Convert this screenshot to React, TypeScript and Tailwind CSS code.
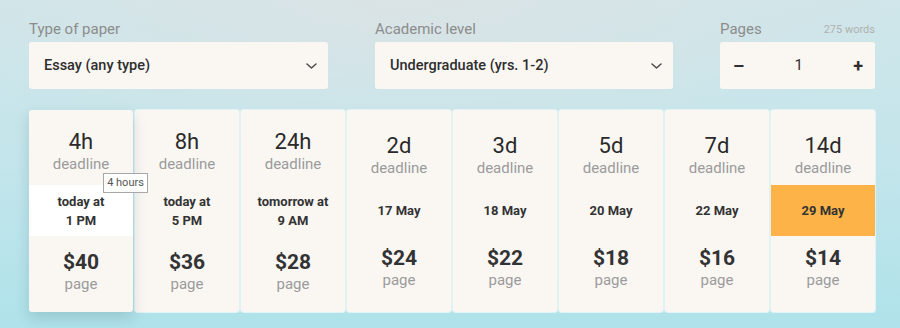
import React from "react";

type Card = {
  t: string;
  date: string[];
  price: string;
  state?: "selected" | "highlight";
};

const cards: Card[] = [
  { t: "4h", date: ["today at", "1 PM"], price: "$40", state: "selected" },
  { t: "8h", date: ["today at", "5 PM"], price: "$36" },
  { t: "24h", date: ["tomorrow at", "9 AM"], price: "$28" },
  { t: "2d", date: ["17 May"], price: "$24" },
  { t: "3d", date: ["18 May"], price: "$22" },
  { t: "5d", date: ["20 May"], price: "$18" },
  { t: "7d", date: ["22 May"], price: "$16" },
  { t: "14d", date: ["29 May"], price: "$14", state: "highlight" },
];

function Chevron() {
  return (
    <svg width="11" height="6" viewBox="0 0 11 6" fill="none">
      <path d="M1 1l4.5 4L10 1" stroke="#4a4a4a" strokeWidth="1.5" strokeLinecap="round" strokeLinejoin="round" />
    </svg>
  );
}

function Select({ label, value }: { label: string; value: string }) {
  return (
    <div className="flex flex-col">
      <div className="h-[18px] text-[15px] leading-[18px] text-[#8c8c8c] mb-[4px]">{label}</div>
      <div className="h-[47px] rounded-[3px] bg-[#faf7f3] flex items-center justify-between pl-[15px] pr-[11px]">
        <span className="text-[14.5px] font-medium text-[#2e2e2e]">{value}</span>
        <Chevron />
      </div>
    </div>
  );
}

export default function App() {
  return (
    <div
      className="w-[900px] h-[328px] overflow-hidden pl-[29px] pr-[25px] pt-[20px] bg-[radial-gradient(ellipse_60%_45%_at_45%_0%,#dae3e5_0%,rgba(218,227,229,0)_100%),linear-gradient(180deg,#cfe6ea_0%,#c3e5eb_50%,#afe2ea_100%)]"
      style={{ fontFamily: "Roboto, 'Open Sans', sans-serif" }}
    >
      <div className="flex gap-[47px]">
        <div className="w-[299px] flex-none">
          <Select label="Type of paper" value="Essay (any type)" />
        </div>
        <div className="w-[298px] flex-none">
          <Select label="Academic level" value="Undergraduate (yrs. 1-2)" />
        </div>
        <div className="w-[155px] flex-none flex flex-col">
          <div className="h-[18px] flex items-end justify-between mb-[4px] leading-[18px]">
            <span className="text-[15px] text-[#8c8c8c]">Pages</span>
            <span className="text-[11px] text-[#b0b0b0] pb-[1px] leading-[14px]">275 words</span>
          </div>
          <div className="h-[47px] rounded-[3px] bg-[#faf7f3] flex items-center justify-between pl-[13px] pr-[12px] text-[#2e2e2e]">
            <span className="text-[18px] font-bold leading-none">–</span>
            <span className="text-[15px]">1</span>
            <span className="text-[18px] font-bold leading-none">+</span>
          </div>
        </div>
      </div>

      <div className="mt-[21px] flex gap-[2px] h-[202px]">
        {cards.map((c) => {
          const two = c.date.length > 1;
          const selected = c.state === "selected";
          const highlight = c.state === "highlight";
          return (
            <div
              key={c.t}
              className={
                "relative w-[104px] flex-none flex flex-col rounded-[3px] bg-[#faf7f3] overflow-visible " +
                (selected ? "shadow-[0_6px_14px_rgba(40,80,90,0.18)] z-10" : "shadow-[0_0_0_1px_rgba(230,244,246,0.9)]")
              }
            >
              <div className={"h-[75px] flex flex-col items-center " + (two ? "pt-[19px]" : "pt-[23px]")}>
                <div className="text-[22px] leading-[26px] font-normal text-[#2a2a2a]">{c.t}</div>
                <div className="text-[15px] leading-[18px] text-[#9b9b9b]">deadline</div>
              </div>
              <div
                className={
                  "h-[51px] flex flex-col items-center justify-center text-[13px] leading-[19px] font-bold text-[#333] " +
                  (selected ? "bg-white" : highlight ? "bg-[#fdb347]" : "")
                }
              >
                {c.date.map((d) => (
                  <div key={d}>{d}</div>
                ))}
              </div>
              <div className={"flex-1 flex flex-col items-center " + (two ? "pt-[13px]" : "pt-[9px]")}>
                <div className="text-[21px] leading-[26px] font-bold text-[#333]">{c.price}</div>
                <div className="text-[15px] leading-[18px] text-[#9b9b9b]">page</div>
              </div>
              {selected && (
                <div className="absolute left-[74px] top-[63px] w-[45px] h-[20px] bg-white border border-[#a8a8a8] flex items-center justify-center text-[11px] text-[#555] z-20">
                  4 hours
                </div>
              )}
            </div>
          );
        })}
      </div>
    </div>
  );
}
